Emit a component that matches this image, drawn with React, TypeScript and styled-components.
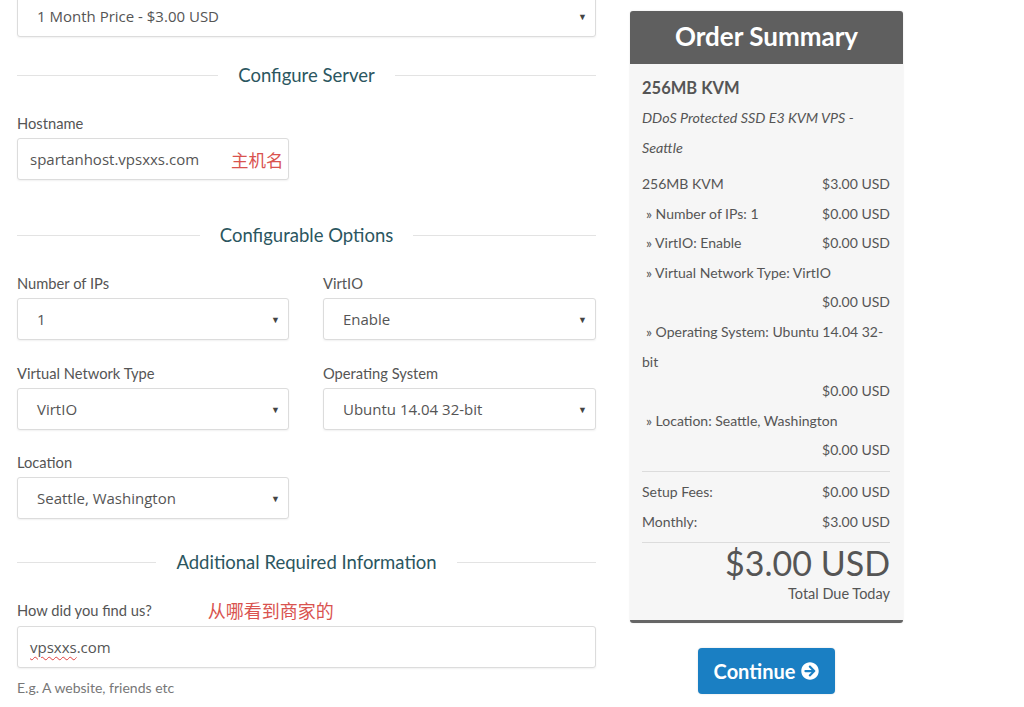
import React from 'react';
import styled, { createGlobalStyle } from 'styled-components';
import { FaArrowCircleRight } from 'react-icons/fa';

const GlobalStyle = createGlobalStyle`
  html, body {
    margin: 0;
    padding: 0;
    background: #ffffff;
    font-family: Lato, "Liberation Sans", Arial, sans-serif;
    color: #555;
  }
`;

const Page = styled.div`
  display: flex;
  align-items: flex-start;
  gap: 34px;
  padding-left: 17px;
  width: 1024px;
  height: 707px;
  overflow: hidden;
  box-sizing: border-box;
`;

const FormColumn = styled.div`
  width: 579px;
  margin-top: -5px;
  display: flex;
  flex-direction: column;
`;

const SectionTitle = styled.div<{ $top: number }>`
  display: flex;
  align-items: center;
  gap: 20px;
  margin-top: ${(p) => p.$top}px;
  height: 24px;
  font-size: 18.5px;
  color: #2b5660;
  white-space: nowrap;

  &::before,
  &::after {
    content: '';
    flex: 1;
    height: 1px;
    background: #e3e3e3;
  }
`;

const Label = styled.div<{ $top: number }>`
  margin-top: ${(p) => p.$top}px;
  height: 20px;
  line-height: 20px;
  font-size: 14.7px;
  color: #555;
  display: flex;
  align-items: center;
`;

const Note = styled.span<{ $left?: number; $size?: number }>`
  flex-shrink: 0;
  white-space: nowrap;
  font-family: "Noto Sans CJK SC", sans-serif;
  color: #d9534f;
  font-size: ${(p) => p.$size ?? 17.5}px;
  margin-left: ${(p) => p.$left ?? 0}px;
`;

const Control = styled.div<{ $width?: number; $top?: number; $select?: boolean }>`
  box-sizing: border-box;
  width: ${(p) => (p.$width ? `${p.$width}px` : '100%')};
  height: 42px;
  margin-top: ${(p) => p.$top ?? 5}px;
  border: 1px solid #dcdcdc;
  border-radius: 3px;
  box-shadow: 0 1px 2px rgba(0, 0, 0, 0.06);
  background: #fff;
  display: flex;
  align-items: center;
  padding: ${(p) => (p.$select ? '0 8px 0 19px' : '0 2px 0 12px')};
  font-family: "Open Sans", "Liberation Sans", sans-serif;
  font-size: 15px;
  color: #555;
`;

const ControlText = styled.span`
  flex-shrink: 0;
  white-space: nowrap;
`;

const Caret = styled.span`
  margin-left: auto;
  font-size: 9px;
  color: #444;
`;

const Spell = styled.span`
  text-decoration: underline wavy #e04040;
  text-decoration-thickness: 1px;
  text-underline-offset: 3px;
`;

const OptionGrid = styled.div`
  display: grid;
  grid-template-columns: 272px 273px;
  column-gap: 34px;
`;

const Field = styled.div`
  display: flex;
  flex-direction: column;
`;

const Help = styled.div`
  margin-top: 11px;
  font-size: 14px;
  color: #777;
  line-height: 18px;
`;

const SideColumn = styled.div`
  width: 273px;
  margin-top: 11px;
  display: flex;
  flex-direction: column;
  align-items: center;
`;

const Summary = styled.div`
  width: 100%;
  border-radius: 3px;
  overflow: hidden;
  background: #f6f6f6;
  border-bottom: 3px solid #666;
  box-shadow: 0 0 2px rgba(0, 0, 0, 0.12);
`;

const SummaryHeader = styled.div`
  box-sizing: border-box;
  height: 53px;
  padding-bottom: 4px;
  background: #5f5f5f;
  color: #fff;
  font-size: 26px;
  font-weight: 700;
  display: flex;
  align-items: center;
  justify-content: center;
`;

const SummaryBody = styled.div`
  padding: 12px 13px 16px 12px;
  font-size: 14px;
  color: #555;
`;

const Product = styled.div`
  font-size: 16.5px;
  font-weight: 700;
  line-height: 24px;
  color: #555;
`;

const Desc = styled.div`
  margin: 3px 0 6px;
  font-style: italic;
  line-height: 30px;
  font-size: 14.3px;
`;

const Row = styled.div`
  display: flex;
  justify-content: space-between;
  line-height: 29.6px;
  white-space: nowrap;
`;

const Line = styled.div<{ $right?: boolean; $indent?: boolean }>`
  line-height: 29.6px;
  text-align: ${(p) => (p.$right ? 'right' : 'left')};
  padding-left: ${(p) => (p.$indent ? 4 : 0)}px;
`;

const Sub = styled.span`
  padding-left: 4px;
`;

const Divider = styled.div<{ $top: number }>`
  height: 1px;
  background: #dcdcdc;
  margin-top: ${(p) => p.$top}px;
  margin-bottom: 5px;
`;

const Total = styled.div`
  margin-top: -2px;
  text-align: right;
  font-size: 34px;
  line-height: 34px;
  color: #555;
`;

const TotalLabel = styled.div`
  margin-top: 4px;
  text-align: right;
  line-height: 20px;
  font-size: 14.5px;
`;

const ContinueButton = styled.button`
  margin-top: 25px;
  width: 137px;
  height: 46px;
  border: none;
  border-radius: 4px;
  background: #1a7fc3;
  color: #fff;
  font-family: Lato, "Liberation Sans", sans-serif;
  font-size: 20px;
  font-weight: 700;
  display: flex;
  align-items: center;
  justify-content: center;
  gap: 6px;
  box-shadow: 0 0 2px rgba(0, 0, 0, 0.15);
`;

function Select({ value, width, top }: { value: string; width?: number; top?: number }) {
  return (
    <Control $select $width={width} $top={top}>
      <ControlText>{value}</ControlText>
      <Caret>▼</Caret>
    </Control>
  );
}

export default function App() {
  return (
    <>
      <GlobalStyle />
      <Page>
        <FormColumn>
          <Select value="1 Month Price - $3.00 USD" top={0} />

          <SectionTitle $top={26}>Configure Server</SectionTitle>
          <Label $top={26}>Hostname</Label>
          <Control $width={272}>
            <ControlText>spartanhost.vpsxxs.com</ControlText>
            <Note $left={32}>主机名</Note>
          </Control>

          <SectionTitle $top={43}>Configurable Options</SectionTitle>
          <OptionGrid>
            <Field>
              <Label $top={26}>Number of IPs</Label>
              <Select value="1" />
            </Field>
            <Field>
              <Label $top={26}>VirtIO</Label>
              <Select value="Enable" />
            </Field>
            <Field>
              <Label $top={23}>Virtual Network Type</Label>
              <Select value="VirtIO" />
            </Field>
            <Field>
              <Label $top={23}>Operating System</Label>
              <Select value="Ubuntu 14.04 32-bit" />
            </Field>
            <Field>
              <Label $top={22}>Location</Label>
              <Select value="Seattle, Washington" />
            </Field>
          </OptionGrid>

          <SectionTitle $top={31}>Additional Required Information</SectionTitle>
          <Label $top={26}>
            How did you find us?
            <Note $left={56} $size={18}>从哪看到商家的</Note>
          </Label>
          <Control $top={6}>
            <ControlText>
              <Spell>vpsxxs</Spell>.com
            </ControlText>
          </Control>
          <Help>E.g. A website, friends etc</Help>
        </FormColumn>

        <SideColumn>
          <Summary>
            <SummaryHeader>Order Summary</SummaryHeader>
            <SummaryBody>
              <Product>256MB KVM</Product>
              <Desc>DDoS Protected SSD E3 KVM VPS - Seattle</Desc>
              <Row>
                <span>256MB KVM</span>
                <span>$3.00 USD</span>
              </Row>
              <Row>
                <Sub>» Number of IPs: 1</Sub>
                <span>$0.00 USD</span>
              </Row>
              <Row>
                <Sub>» VirtIO: Enable</Sub>
                <span>$0.00 USD</span>
              </Row>
              <Line $indent>» Virtual Network Type: VirtIO</Line>
              <Line $right>$0.00 USD</Line>
              <Line>
                <Sub>» Operating System: Ubuntu 14.04 32-</Sub>
                <br />
                bit
              </Line>
              <Line $right>$0.00 USD</Line>
              <Line $indent>» Location: Seattle, Washington</Line>
              <Line $right>$0.00 USD</Line>
              <Divider $top={6} />
              <Row>
                <span>Setup Fees:</span>
                <span>$0.00 USD</span>
              </Row>
              <Row>
                <span>Monthly:</span>
                <span>$3.00 USD</span>
              </Row>
              <Divider $top={6} />
              <Total>$3.00 USD</Total>
              <TotalLabel>Total Due Today</TotalLabel>
            </SummaryBody>
          </Summary>
          <ContinueButton>
            Continue <FaArrowCircleRight size={18} />
          </ContinueButton>
        </SideColumn>
      </Page>
    </>
  );
}
